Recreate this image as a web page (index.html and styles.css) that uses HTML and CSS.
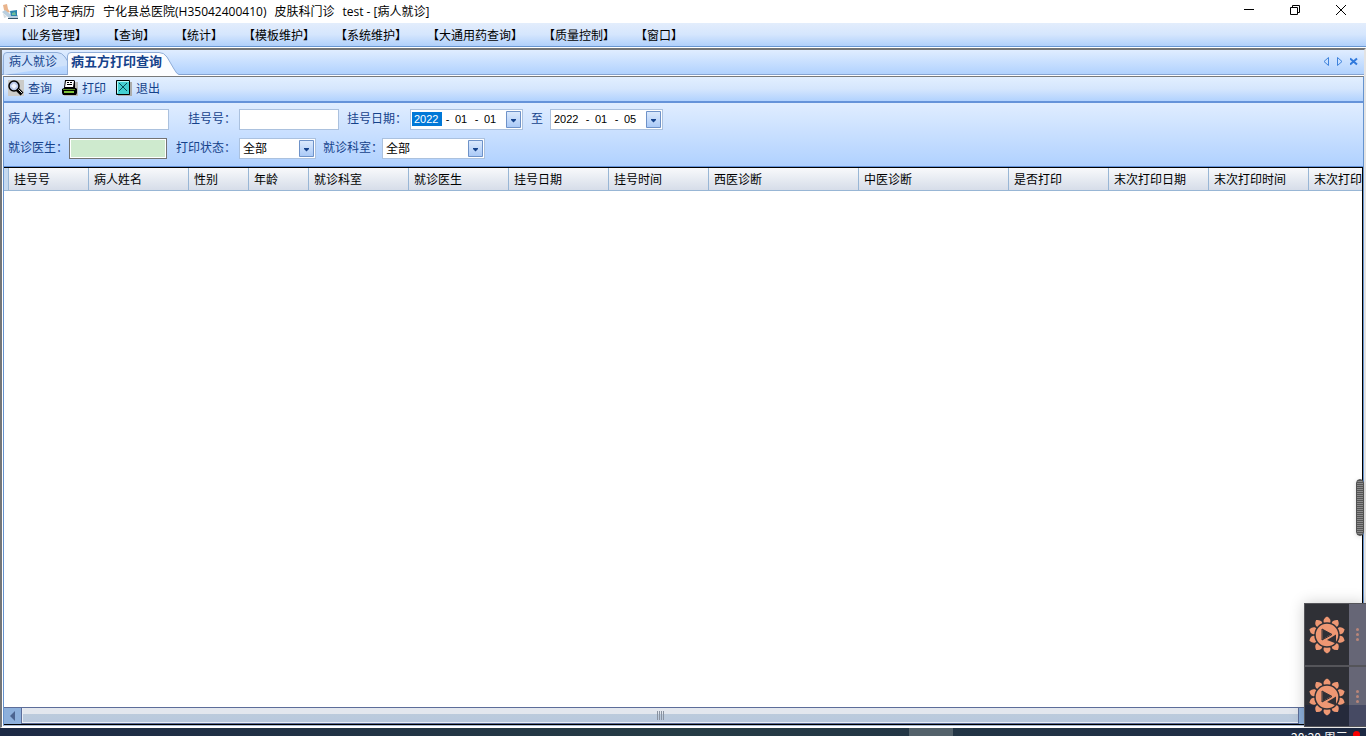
FILE: index.html
```html
<!DOCTYPE html>
<html lang="zh-CN">
<head>
    <meta charset="UTF-8">
    <meta name="viewport" content="width=device-width, initial-scale=1.0">
    <title>门诊电子病历</title>
    <link rel="stylesheet" href="styles.css">
</head>
<body>
    <header class="titlebar">
        <svg class="app-icon" viewBox="0 0 16 16" width="16" height="16">
            <path d="M1 1l4-1 1 5 2 3-3 1-3-3z" fill="#e9b48c"/>
            <path d="M0 8l3-2 5 4 8 1v3H7z" fill="#b9cfdf"/>
            <path d="M8 7l7-1v6H9z" fill="#2b83ae"/>
            <path d="M10 9l3-1 1 3h-4z" fill="#6fbf9a"/>
            <path d="M1 9l4 4-3 1z" fill="#d5dde2"/>
            <path d="M6 14h10v1H6z" fill="#35546a"/>
        </svg>
        <h1 class="title">
            <span>门诊电子病历</span>
            <span>宁化县总医院(H35042400410)</span>
            <span>皮肤科门诊</span>
            <span>test - [病人就诊]</span>
        </h1>
        <div class="window-buttons">
            <button type="button" aria-label="最小化"><svg width="12" height="12"><path d="M1 5.500h10" stroke="#000"/></svg></button>
            <button type="button" aria-label="还原"><svg width="12" height="12"><path d="M1.500 3.500h7v7h-7zM3.500 3.500v-2h7v7h-2" fill="none" stroke="#000"/></svg></button>
            <button type="button" aria-label="关闭"><svg width="12" height="12"><path d="M1 1l10 10M11 1L1 11" stroke="#000"/></svg></button>
        </div>
    </header>

    <nav class="menubar">
        <a href="#">【业务管理】</a>
        <a href="#">【查询】</a>
        <a href="#">【统计】</a>
        <a href="#">【模板维护】</a>
        <a href="#">【系统维护】</a>
        <a href="#">【大通用药查询】</a>
        <a href="#">【质量控制】</a>
        <a href="#">【窗口】</a>
    </nav>

    <main class="workspace">
        <div class="tabs">
            <button type="button" class="tab">
                <svg class="tab-shape" width="68" height="23"><path d="M.5 23V4Q.5 .5 4 .5H54Q59 .5 62 5L67 13" fill="#cfe2fb" stroke="#8fadd8"/></svg>
                <span>病人就诊</span>
            </button>
            <button type="button" class="tab active">
                <svg class="tab-shape" width="112" height="23"><path d="M.5 23V4Q.5 .5 4 .5H92Q97 .5 100 5L107 17Q110 22.500 112 22.500V23" fill="#fcfdff" stroke="#8fadd8"/></svg>
                <span>病五方打印查询</span>
            </button>
            <div class="tab-nav">
                <button type="button" aria-label="上一个"><svg width="8" height="10"><path d="M6.500 .5v8L2 4.500z" fill="none" stroke="#3f83dc"/></svg></button>
                <button type="button" aria-label="下一个"><svg width="8" height="10"><path d="M1.500 .5v8L6 4.500z" fill="none" stroke="#3f83dc"/></svg></button>
                <button type="button" aria-label="关闭标签"><svg width="8" height="10"><path d="M0 1.500l7 6M7 1.500l-7 6" stroke="#3079dc" stroke-width="2"/></svg></button>
            </div>
        </div>

        <section class="page">
            <div class="toolbar">
                <button type="button">
                    <svg width="16" height="16"><path d="M0 0h16v16H0z" fill="#cbcbc9"/><path d="M9 9l5 5" stroke="#000" stroke-width="4"/><path d="M10 9l4 4" stroke="#ddd"/><circle cx="6" cy="6" r="5" fill="#b9c7e8" stroke="#000" stroke-width="1.500"/><path d="M3 6l3-3 3 3-3 3z" fill="#eef2fb"/></svg>
                    <span>查询</span>
                </button>
                <button type="button">
                    <svg width="16" height="16"><path d="M3 2h13v14H2z" fill="#b9bab8"/><path d="M3 0h9l1 1v7h1l1 1v4l-1 2H1l-1-2V9l2-1z" fill="#000"/><path d="M4 1h8l-1 6H3z" fill="#fff"/><path d="M5 2.500h2M8 2.500h2M5 4.500h5" stroke="#000"/><path d="M1 9h12v1H1z" fill="#5f8f2a"/><path d="M2 11h10v2H2z" fill="#7fc23a"/></svg>
                    <span>打印</span>
                </button>
                <button type="button">
                    <svg width="16" height="16"><path d="M2 2h14v14H2z" fill="#adadab"/><path d="M.5 .5h13v14H.5z" fill="#43cfd2" stroke="#000"/><path d="M3 3l8 8M11 3l-8 8" stroke="#064e59"/><path d="M1.500 13V1.500H13" fill="none" stroke="#b5f8f7"/></svg>
                    <span>退出</span>
                </button>
            </div>

            <form class="filters">
                <div class="filter-row">
                    <label for="patient">病人姓名：</label>
                    <input type="text" id="patient" class="field text">
                    <label for="regNo" class="reg-label">挂号号：</label>
                    <input type="text" id="regNo" class="field text">
                    <label for="yearFrom" class="date-label">挂号日期：</label>
                    <div class="field date">
                        <input id="yearFrom" class="year selected" value="2022">
                        <span>-</span>
                        <input aria-label="开始月" value="01">
                        <span>-</span>
                        <input aria-label="开始日" value="01">
                        <button type="button" class="drop" aria-label="选择开始日期"></button>
                    </div>
                    <label for="yearTo" class="to-label">至</label>
                    <div class="field date">
                        <input id="yearTo" class="year" value="2022">
                        <span>-</span>
                        <input aria-label="结束月" value="01">
                        <span>-</span>
                        <input aria-label="结束日" value="05">
                        <button type="button" class="drop" aria-label="选择结束日期"></button>
                    </div>
                </div>
                <div class="filter-row">
                    <label for="doctor">就诊医生：</label>
                    <input type="text" id="doctor" class="field doctor">
                    <label for="printState" class="state-label">打印状态：</label>
                    <select id="printState" class="field state">
                        <option>全部</option>
                    </select>
                    <label for="dept" class="dept-label">就诊科室：</label>
                    <select id="dept" class="field dept">
                        <option>全部</option>
                    </select>
                </div>
            </form>

            <div class="grid">
                <div class="grid-body">
                    <table>
                        <colgroup>
                            <col class="w-mark"><col class="w-80"><col class="w-100"><col class="w-60"><col class="w-60"><col class="w-100"><col class="w-100"><col class="w-100"><col class="w-100"><col class="w-150"><col class="w-150"><col class="w-100"><col class="w-100"><col class="w-100"><col class="w-100">
                        </colgroup>
                        <thead>
                            <tr>
                                <td class="mark"></td>
                                <th>挂号号</th>
                                <th>病人姓名</th>
                                <th>性别</th>
                                <th>年龄</th>
                                <th>就诊科室</th>
                                <th>就诊医生</th>
                                <th>挂号日期</th>
                                <th>挂号时间</th>
                                <th>西医诊断</th>
                                <th>中医诊断</th>
                                <th>是否打印</th>
                                <th>末次打印日期</th>
                                <th>末次打印时间</th>
                                <th>末次打印</th>
                            </tr>
                        </thead>
                    </table>
                </div>
                <div class="scrollbar">
                    <button type="button" aria-label="向左滚动"><svg width="6" height="10"><path d="M5 0v10L0 5z" fill="#4c6490"/></svg></button>
                    <div class="thumb"><i></i><i></i><i></i><i></i></div>
                    <div class="track"></div>
                    <button type="button" aria-label="向右滚动"><svg width="6" height="10"><path d="M0 0v10l6-5z" fill="#4c6490"/></svg></button>
                </div>
            </div>
        </section>
    </main>

    <footer class="taskbar">
        <div class="task"></div>
        <div class="clock">20:20 周三</div>
        <div class="alert"></div>
    </footer>

    <div class="side-handle"></div>

    <svg class="defs" width="0" height="0">
        <symbol id="sunflower" viewBox="0 0 36 38">
            <g fill="#ee9773">
                <g id="petals">
                    <path id="petal" d="M18 .5q3.500 2 3.500 4.500 0 1.500-1 2.500h-5q-1-1-1-2.500 0-2.500 3.500-4.500z"/>
                    <use href="#petal" transform="rotate(36 18 19)"/>
                    <use href="#petal" transform="rotate(72 18 19)"/>
                    <use href="#petal" transform="rotate(108 18 19)"/>
                    <use href="#petal" transform="rotate(144 18 19)"/>
                </g>
                <use href="#petals" transform="rotate(180 18 19)"/>
                <circle cx="18" cy="19" r="12" stroke="#2f3036" stroke-width="1.500"/>
            </g>
            <path d="M13.500 13.500v10l9-5.500z" fill="#2f3036"/>
            <path d="M13 13v11l10-5.500z" fill="none" stroke="#2f3036"/>
            <path d="M18 24l9-5.500v9z" fill="#2f3036"/>
        </symbol>
    </svg>
    <aside class="dock">
        <button type="button" class="dock-item" aria-label="播放">
            <svg class="flower" width="36" height="38"><use href="#sunflower"/></svg>
            <span class="dots"><i></i><i></i><i></i></span>
        </button>
        <button type="button" class="dock-item" aria-label="播放">
            <svg class="flower" width="36" height="38"><use href="#sunflower"/></svg>
            <span class="dots"><i></i><i></i><i></i></span>
        </button>
    </aside>
</body>
</html>
```

FILE: styles.css
```css
* { box-sizing: border-box; }
body { margin: 0; height: 100vh; display: flex; flex-direction: column; overflow: hidden; background: #fff; color: #000; font: 12px/16px "Noto Sans CJK SC", sans-serif; }
button, input, select { font: inherit; color: inherit; margin: 0; padding: 0; border: none; border-radius: 0; background: none; }
svg { display: block; flex: none; }

.titlebar { display: flex; align-items: center; height: 23px; padding: 0 2px 0 2px; background: #fff; }
.title { flex: 1; display: flex; gap: 8px; margin: 0 0 0 5px; font: 12px/16px "Open Sans", "Noto Sans CJK SC", sans-serif; white-space: nowrap; }
.window-buttons { display: flex; align-self: stretch; padding-bottom: 3px; }
.window-buttons button { width: 46px; display: flex; align-items: center; justify-content: center; }

.menubar { display: flex; gap: 20px; align-items: center; height: 24px; padding: 0 15px; background: linear-gradient(#e3edfc, #d5e6fd 50%, #b0d0fb); border-bottom: 1px solid #6795d0; }
.menubar a { color: #000; text-decoration: none; white-space: nowrap; }

.workspace { flex: 1; min-height: 0; display: flex; flex-direction: column; margin-top: 1px; border: 2px solid #737577; border-right: 2px solid #e3e3e3; border-bottom: 1px solid #fff; }

.tabs { display: flex; height: 25px; padding: 2px 1px 0; background: linear-gradient(#e0edff, #b1d2fe); border-bottom: 1px solid #85a3d0; }
.tab { position: relative; height: 23px; padding: 0 6px; width: 64px; color: #15428b; text-align: left; white-space: nowrap; }
.tab span { position: relative; display: block; margin-top: -6px; }
.tab.active { width: 110px; padding: 0 4px; font-size: 13px; font-weight: bold; }
.tab-shape { position: absolute; left: 0; top: 0; }
.tab-nav { display: flex; gap: 6px; margin-left: auto; padding: 0 5px 3px; align-items: center; }

.page { flex: 1; min-height: 0; display: flex; flex-direction: column; margin: 1px 0 1px 1px; border-top: 1px solid #77797b; border-left: 1px solid #6593cf; border-right: 1px solid #6593cf; border-bottom: 1px solid #a9bbd8; }
.toolbar { display: flex; gap: 10px; align-items: center; height: 24px; padding: 0 4px 3px; background: linear-gradient(#e2efff, #d5e6fd 50%, #b1d2fe); }
.toolbar button { display: flex; gap: 4px; align-items: center; color: #15428b; }

.filters { display: flex; flex-direction: column; gap: 9px; height: 66px; padding: 6px 4px; background: linear-gradient(#e0edff, #b0d1ff); border-top: 2px solid #6593d9; border-bottom: 1px solid #6593d9; }
.filter-row { display: flex; align-items: center; height: 20px; white-space: nowrap; }
.filter-row label { width: 61px; padding-bottom: 2px; color: #15428b; }
.filter-row .reg-label { width: 51px; margin-left: 19px; }
.filter-row .date-label { width: 63px; margin-left: 8px; }
.filter-row .to-label { width: 19px; margin-left: 8px; }
.filter-row .state-label { width: 63px; margin-left: 9px; }
.filter-row .dept-label { width: 59px; margin-left: 7px; }
.field { height: 21px; background: #fff; border: 1px solid #abc1de; }
.text { width: 100px; padding: 0 3px; }
.doctor { width: 98px; background: #ceeace; border: 1px solid #737373; box-shadow: inset 0 0 0 1px #fff; }
.date { display: flex; align-items: center; width: 113px; padding: 0 1px 1px; font: 11px/14px "Liberation Sans", "Noto Sans CJK SC", sans-serif; }
.date input { width: 18px; height: 14px; padding-left: 2px; }
.date .year { width: 30px; }
.date .selected { background: #0078d7; color: #fff; }
.date span { width: 11px; text-align: center; }
.drop { width: 17px; height: 18px; margin: 1px -1px 0 auto; }
.drop, .state, .dept { background: #fff url("data:image/svg+xml,%3Csvg xmlns='http://www.w3.org/2000/svg' width='15' height='17'%3E%3ClinearGradient id='g' x2='0' y2='1'%3E%3Cstop stop-color='%23dceafd'/%3E%3Cstop offset='1' stop-color='%23a9c9f7'/%3E%3C/linearGradient%3E%3Cpath d='M.5 .5h14v16H.5z' fill='url(%23g)' stroke='%236e92c8'/%3E%3Cpath d='M5 8h5v1L7.500 11.500 5 9z' fill='%2315428b'/%3E%3C/svg%3E") right 1px center no-repeat; }
.state, .dept { appearance: none; padding: 0 18px 1px 3px; }
.state { width: 77px; }
.dept { width: 103px; }

.grid { flex: 1; min-height: 0; display: flex; flex-direction: column; border: solid #000; border-width: 1px 1px 1px 0; background: #fff; }
.grid-body { flex: 1; overflow: hidden; }
table { width: 1405px; table-layout: fixed; border-collapse: separate; border-spacing: 0; }
thead th, thead td { height: 23px; padding: 0 5px; text-align: left; font-weight: normal; white-space: nowrap; background: linear-gradient(#f8f9fb, #d6dde9); border-right: 1px solid #98b6d5; border-bottom: 1px solid #98b6d5; }
thead .mark { padding: 0; background: #c5d9f0; }
.w-mark { width: 5px; }
.w-60 { width: 60px; }
.w-80 { width: 80px; }
.w-100 { width: 100px; }
.w-150 { width: 150px; }

.scrollbar { display: flex; height: 17px; background: #8db0dc; border-top: 1px solid #5c6d99; }
.scrollbar button { width: 17px; display: flex; align-items: center; justify-content: center; }
.thumb { flex: 1; display: flex; gap: 1px; align-items: center; justify-content: center; border: 1px solid #5c6d99; border-top: none; background: linear-gradient(#e3e7ee 40%, #bccbdc 40%, #b8c8de); box-shadow: inset 1px -1px #e8edf5; }
.thumb i { width: 1px; height: 9px; background: #8a93a1; }
.track { width: 46px; }

.taskbar { display: flex; height: 8px; background: linear-gradient(90deg, #1d2a45, #263c45 50%, #1d2a45); overflow: hidden; }
.task { width: 44px; margin-left: auto; margin-right: 338px; background: #54626b; }
.clock { width: 62px; padding-top: 1px; color: #fff; white-space: nowrap; }
.alert { width: 7px; height: 7px; margin: 3px 6px 0 0; border-radius: 50%; background: #f00; }

/* floating widgets over the window */
.side-handle { position: absolute; right: 2px; top: 479px; width: 8px; height: 57px; border-radius: 4px; background: repeating-linear-gradient(#555 0 1px, #8b8b8b 1px 2px); border: 1px solid #505050; box-shadow: 0 1px 4px #0002; }
.defs { position: absolute; }
.dock { position: absolute; right: 0; bottom: 9px; width: 62px; border: 1px solid #55555a; border-right: none; box-shadow: 0 0 14px #0003; }
.dock-item { display: flex; width: 100%; height: 61px; background: #2f3036; }
.dock-item + .dock-item { border-top: 2px solid #55555a; background: linear-gradient(#2f3036 65%, #252a3b 65%); }
.flower { margin: 12px 4px 0; }
.dots { flex: 1; align-self: stretch; display: flex; flex-direction: column; gap: 2px; align-items: center; justify-content: center; background: #666676; }
.dots i { width: 3px; height: 3px; border-radius: 50%; background: #b98679; }
.dock-item + .dock-item .dots { background: linear-gradient(#666676 65%, #464a63 65%); }
.dock-item + .dock-item .flower { margin-top: 11px; }
```
